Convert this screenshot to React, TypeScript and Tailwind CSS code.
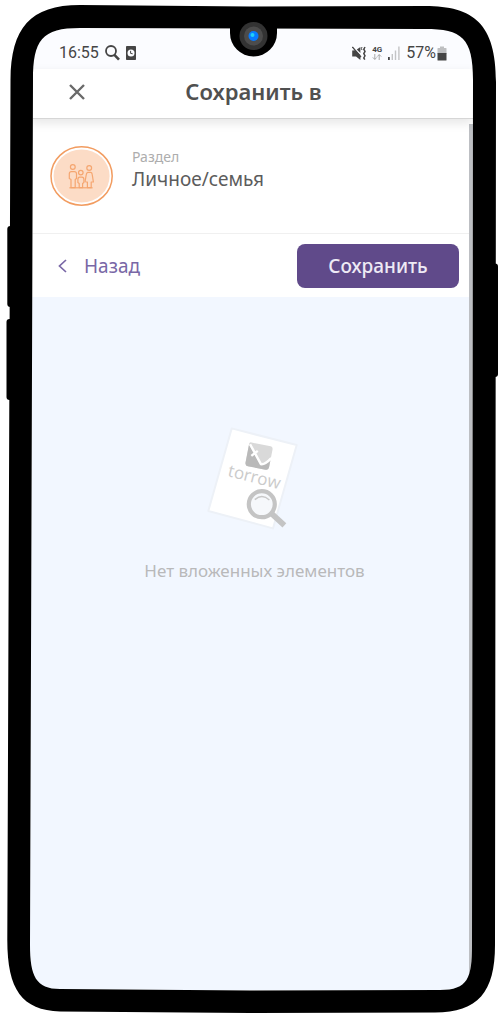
function MagnifierIcon() {
  return (
    <svg aria-hidden="true" viewBox="0 0 15 16" className="h-4 w-[15px]" fill="none" stroke="#454545">
      <circle cx="6" cy="6" r="5" strokeWidth="1.8" />
      <path d="M9.4 9.8 L14 14.6" strokeWidth="2.6" />
    </svg>
  );
}

function ClockBadgeIcon() {
  return (
    <svg aria-hidden="true" viewBox="0 0 10 14" className="h-[14px] w-[10px]">
      <rect width="10" height="14" rx="0.8" fill="#454545" />
      <circle cx="5" cy="7" r="3.5" fill="#fbfcff" />
      <path d="M4.6 4.8 V7.4 L6.7 7.8" fill="none" stroke="#454545" strokeWidth="1" />
    </svg>
  );
}

function MutedIcon() {
  return (
    <svg aria-hidden="true" viewBox="0 0 14 15" className="h-[15px] w-[14px]" fill="none" stroke="#454545">
      <path d="M0.2 4.6 L3.6 4.2 L8.4 9 V14 L4 10.4 H0.2 Z" fill="#454545" stroke="none" />
      <path d="M4.8 3.4 L8.4 1 V7 Z" fill="#454545" stroke="none" />
      <path d="M0.4 1 L9 11.2" strokeWidth="1.3" />
      <path d="M10 1 L9.4 2.6 L10 4" strokeWidth="1" />
      <path d="M13 1 L11.8 3.2 L13 5.4 L11.8 7.6 L13 9.8 L11.8 12 L12.8 13.6" strokeWidth="1.5" />
    </svg>
  );
}

function NetworkIcon() {
  return (
    <span className="flex flex-col items-center">
      <span className="text-[8px] leading-[8px] font-bold">4G</span>
      <svg aria-hidden="true" viewBox="0 0 10 6" className="h-[6px] w-[10px]" fill="none" stroke="#a9a9a9" strokeWidth="1">
        <path d="M2.8 0 V5.4 M0.8 3.4 L2.8 5.4 L4.8 3.4" />
        <path d="M7.2 6 V0.6 M5.2 2.6 L7.2 0.6 L9.2 2.6" />
      </svg>
    </span>
  );
}

function SignalIcon() {
  return (
    <svg aria-hidden="true" viewBox="0 0 12 14" className="h-[14px] w-3">
      <rect x="0" y="11" width="1.8" height="3" fill="#454545" />
      <rect x="3.6" y="8" width="1.4" height="6" fill="#c3c4c6" />
      <rect x="6.8" y="4.5" width="1.4" height="9.5" fill="#c3c4c6" />
      <rect x="10.2" y="0.5" width="1.4" height="13.5" fill="#c3c4c6" />
    </svg>
  );
}

function BatteryIcon() {
  return (
    <svg aria-hidden="true" viewBox="0 0 10 15" className="h-[15px] w-[10px]">
      <path d="M3 0.5 H7 V2 H9 Q9.5 2 9.5 2.6 V8 H0.5 V2.6 Q0.5 2 1 2 H3 Z" fill="#bebfc1" />
      <path d="M0.5 7 H9.5 V14 Q9.5 14.6 9 14.6 H1 Q0.5 14.6 0.5 14 Z" fill="#454545" />
    </svg>
  );
}

function FamilyAvatar() {
  return (
    <svg role="img" aria-label="Семья" viewBox="0 0 64 62" className="h-[62px] w-16 shrink-0" fill="none">
      <ellipse cx="31.6" cy="31" rx="30.6" ry="29.2" fill="#fff" stroke="#f29c60" strokeWidth="1.5" />
      <ellipse cx="31.6" cy="31" rx="28" ry="26.6" fill="#fcdcc6" />
      <g stroke="#f5a670" strokeWidth="1.2" strokeLinejoin="round">
        <circle cx="22.8" cy="22" r="2.4" />
        <path d="M21 42.6 V34.5 L19.3 33.5 V28.6 Q19.4 26.6 21.4 26.6 H24.2 Q26.4 26.6 26.5 28.6 V33.5 L25.2 34.5 V42.6 Z" />
        <circle cx="30.8" cy="27.6" r="2.3" />
        <path d="M29.2 42.6 V38.4 L27.9 37.4 V34.4 Q28 32.2 29.6 32.2 H32 Q33.8 32.2 33.9 34.4 V37.4 L32.6 38.4 V42.6 Z" />
        <circle cx="39.2" cy="23" r="2.4" />
        <path d="M37.6 27.4 H40.8 Q42 27.6 42.2 29.4 L43.4 37 H41.2 V42.6 H37.4 V37 H35.4 M37.6 27.4 Q36.4 28 36.2 30 L35 36.8" />
        <path d="M19.4 42.8 H42.6" />
      </g>
    </svg>
  );
}

function EmptyIllustration() {
  return (
    <svg aria-hidden="true" viewBox="0 0 100 110" className="h-[110px] w-[100px]">
      <path d="M26.7 4.4 L91.7 21 L68 104.4 L3.3 87 Z" fill="#fff" stroke="#edf1f7" strokeWidth="2" strokeLinejoin="round" />
      <g transform="translate(54 32.2) rotate(11)">
        <path d="M-11 -12 H9.5 Q12 -12 12 -9 V8.5 Q12 12 9 12 H-9 Q-12 12 -12 8.5 V-11 Z" fill="#d9d9d9" />
        <path d="M-12 -9 L3.5 8 L12 2 V8.5 Q12 12 9 12 H-9 Q-12 12 -12 8.5 Z" fill="#b9b9b9" />
        <path d="M-11 -10 L3.4 7.4 Q7.4 7.4 12.4 -0.5 M-7.6 1.2 L-2.2 -5" fill="none" stroke="#fff" strokeWidth="2.4" />
      </g>
      <text
        transform="translate(48 58.6) rotate(14)"
        textAnchor="middle"
        className="fill-[#cbcbcb] font-['Open_Sans',sans-serif] text-[17px]"
      >
        torrow
      </text>
      <path d="M66.6 89.6 L79.4 101.4" stroke="#c4c4c4" strokeWidth="5.6" />
      <circle cx="56.8" cy="80.2" r="13" fill="#f6f8fb" stroke="#c4c4c4" strokeWidth="4.2" />
      <path d="M49.8 75.6 Q57.2 69.4 64.4 76" fill="none" stroke="#c8c8c8" strokeWidth="1.4" />
    </svg>
  );
}

function DeviceFrame() {
  return (
    <svg
      aria-hidden="true"
      viewBox="0 0 500 1016"
      preserveAspectRatio="none"
      className="pointer-events-none absolute inset-0 z-20 h-full w-full"
    >
      <path
        fillRule="evenodd"
        fill="#fff"
        d="M0 0 H500 V1016 H0 Z M33 80 C33 40 42 28 80 28 L425 29 C462 29 473 38 473 80 L472 945 C472 978 468 990 440 990 L250 990.5 L60 989 C36 989 30 976 30 945 Z"
      />
      <path
        fillRule="evenodd"
        fill="#000"
        d="M10.5 80 C11 28 30 5 80 5 L250 6.5 L425 6 C474 6 496 24 496 82 L495 945 C495 992 478 1012.5 435 1012.5 L250 1013 L60 1011.5 C22 1010 7.3 990 7.3 940 Z M33 80 L30 945 C30 976 36 989 60 989 L250 990.5 L440 990 C468 990 472 978 472 945 L473 80 C473 38 462 29 425 29 L80 28 C42 28 33 40 33 80 Z"
      />
      <rect x="7.3" y="226" width="8" height="81" rx="3" />
      <rect x="6.5" y="319" width="8" height="81" rx="3" />
      <rect x="490" y="263.5" width="8" height="113.5" rx="3" />
      <path d="M230 20 H277 V33 A23.5 23.5 0 0 1 230 33 Z" />
      <circle cx="253.5" cy="36" r="14" fill="#333" />
      <circle cx="253.5" cy="36" r="9.5" fill="#4c4c4c" />
      <circle cx="253.5" cy="36" r="5" fill="#087bff" />
      <circle cx="252.5" cy="35" r="2" fill="#22d0f5" />
    </svg>
  );
}

export default function App() {
  return (
    <div className="relative flex min-h-screen flex-col bg-white pt-7 pr-[27px] pb-[26px] pl-[30px] font-['Noto_Sans',sans-serif]">
      <div className="flex grow flex-col bg-[#f2f7ff]">
        <div className="flex h-[41px] items-center justify-between bg-[#fbfcff] pt-[9px] pr-[26px] pl-[29px] font-[Roboto,sans-serif] text-base text-[#454545]">
          <div className="flex items-center gap-[6px]">
            <span>16:55</span>
            <MagnifierIcon />
            <ClockBadgeIcon />
          </div>
          <div className="flex items-center gap-[6px]">
            <MutedIcon />
            <NetworkIcon />
            <SignalIcon />
            <span className="flex items-center gap-px">
              57%
              <BatteryIcon />
            </span>
          </div>
        </div>

        <header className="relative z-10 grid h-[50px] grid-cols-[1fr_auto_1fr] items-center border-b border-[#d6d6d6] bg-white pr-8 pb-1 pl-9 shadow-[0_4px_10px_rgba(0,0,0,0.1)]">
          <button type="button" aria-label="Закрыть" className="w-[22px] p-[3px]">
            <svg viewBox="0 0 16 16" className="size-4" fill="none" stroke="#6a6a6a" strokeWidth="2.4">
              <path d="M1 1 L15 15 M15 1 L1 15" />
            </svg>
          </button>
          <h1 className="text-[22px] font-semibold text-[#505050]">Сохранить в</h1>
        </header>

        <main className="flex grow flex-col">
          <section className="flex h-[115px] items-start gap-[18px] border-b border-[#f0f0f0] bg-white pt-[26px] pl-5">
            <FamilyAvatar />
            <div className="flex flex-col pt-[2px]">
              <span className="text-[14px] leading-5 text-[#adadad]">Раздел</span>
              <span className="text-[19px] leading-6 text-[#5c5c5c]">Личное/семья</span>
            </div>
          </section>

          <nav className="flex h-[63px] items-center justify-between bg-white pr-[14px] pl-7">
            <button type="button" className="flex items-center gap-[17px] text-[19px] text-[#7967a6]">
              <svg aria-hidden="true" viewBox="0 0 9 14" className="h-[14px] w-[9px]" fill="none" stroke="#7967a6" strokeWidth="1.7">
                <path d="M8 1 L1.5 7 L8 13" />
              </svg>
              <span className="pt-[2px]">Назад</span>
            </button>
            <button type="button" className="h-11 w-[162px] rounded-lg bg-[#604a8a] pt-[2px] text-[19px] font-medium text-[#eeeaf5]">
              Сохранить
            </button>
          </nav>

          <section className="flex flex-col items-center gap-6 pt-[127px] pl-[6px]">
            <EmptyIllustration />
            <p className="text-[17px] text-[#b9b9ba]">Нет вложенных элементов</p>
          </section>
        </main>
      </div>
      <div className="absolute top-[124px] right-[27px] bottom-[40px] w-1 bg-[#bdbfc3]" />
      <DeviceFrame />
    </div>
  );
}
